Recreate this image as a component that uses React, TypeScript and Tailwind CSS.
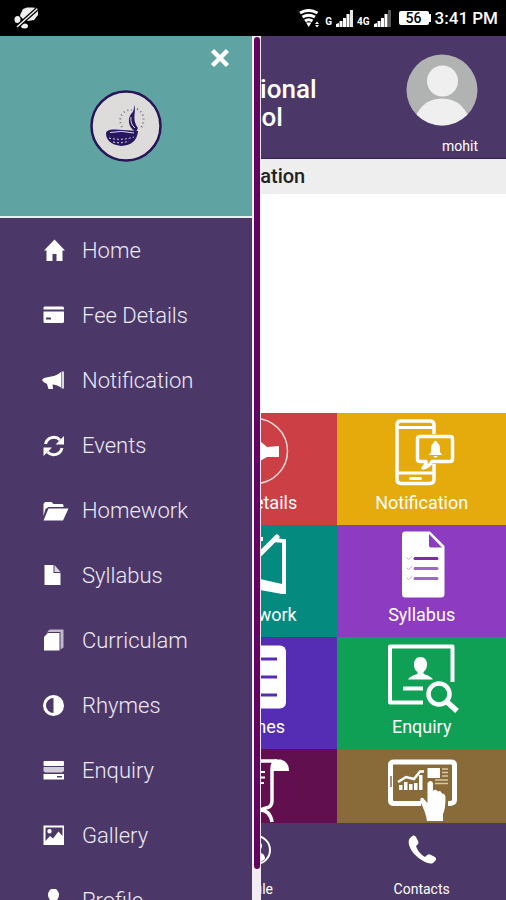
import type { ReactNode } from "react";

const menuItems: { label: string; icon: ReactNode }[] = [
  {
    label: "Home",
    icon: <path d="M12.5 0.5 L23 11.5 H20.5 V22 H14.5 V15 H10.5 V22 H4.5 V11.5 H2 Z" />,
  },
  {
    label: "Fee Details",
    icon: (
      <path
        fillRule="evenodd"
        d="M2.5 2.5 H20.5 Q22 2.5 22 4 V5.5 H1.5 V4 Q1.5 2.5 2.5 2.5 Z M1.5 7.5 H22 V17.5 Q22 19 20.5 19 H3 Q1.5 19 1.5 17.5 Z M4 13.5 V15.5 H9 V13.5 Z"
      />
    ),
  },
  {
    label: "Notification",
    icon: (
      <>
        <path d="M19 3 V18.5 C16 16.5 13 15.5 10.5 15.5 L11 20 H6.5 L5 15 L1.5 13 L0 11 L2 9 L9 7.5 C13 7 16 5.5 19 3 Z" />
        <path opacity="0.8" d="M19.5 2.5 H22 V19.5 H19.5 Z" />
      </>
    ),
  },
  {
    label: "Events",
    icon: (
      <>
        <path
          fill="none"
          stroke="currentColor"
          strokeWidth="3"
          d="M3.5 10 A8.5 8.5 0 0 1 18 6 M20 14 A8.5 8.5 0 0 1 5.5 18"
        />
        <path d="M22 2 V10.5 H13.5 Z M1.5 22 V13.5 H10 Z" />
      </>
    ),
  },
  {
    label: "Homework",
    icon: (
      <>
        <path d="M1.5 17 V5 L3 3 H9.5 L11.5 5 H20.5 L21.5 6 V8 H6.5 L3.5 10 Z" />
        <path d="M6.5 9.5 H26.5 L21 21.5 H1.5 Z" />
      </>
    ),
  },
  {
    label: "Syllabus",
    icon: (
      <>
        <path d="M2.5 1 H11.5 V9 H18.5 V21 H2.5 Z" />
        <path opacity="0.8" d="M12.5 1 L18.5 8 H12.5 Z" />
      </>
    ),
  },
  {
    label: "Curriculam",
    icon: (
      <>
        <path d="M6 4 H17.5 V21.5 H2 V8 Z" />
        <path opacity="0.65" d="M3 6 L7.5 0.5 H21.5 V18.5 L18.5 20.5 V3 H6 Z" />
      </>
    ),
  },
  {
    label: "Rhymes",
    icon: (
      <path
        fillRule="evenodd"
        d="M11.5 1 A10.3 10.3 0 1 1 11.5 22 A10.3 10.3 0 1 1 11.5 1 Z M11.5 4 A7.5 7.5 0 0 0 11.5 19 Z"
      />
    ),
  },
  {
    label: "Enquiry",
    icon: (
      <>
        <rect x="1.5" y="2" width="20.5" height="5" rx="1" />
        <path opacity="0.75" d="M1.5 8 H22 V12 L20 13.5 H3 L1.5 12 Z" />
        <path fillRule="evenodd" d="M1.5 15 H22 V20.5 H1.5 Z M15 17 V18.5 H20 V17 Z" />
      </>
    ),
  },
  {
    label: "Gallery",
    icon: (
      <path
        fillRule="evenodd"
        d="M1.5 1.5 H22 V21 H1.5 Z M3.5 3.5 V17 L8 12 L11 14.5 L16.5 7.5 L20.5 12 V3.5 Z M7.5 5 A2.2 2.2 0 1 1 7.5 9.4 A2.2 2.2 0 1 1 7.5 5 Z"
      />
    ),
  },
  {
    label: "Profile",
    icon: (
      <>
        <ellipse cx="11.5" cy="6" rx="5.5" ry="6.5" />
        <path d="M2 22 C2 16 8 15 11.5 15 C15 15 21 16 21 22 Z" />
      </>
    ),
  },
];

const tiles: { label: string; color: string; icon: ReactNode }[] = [
  {
    label: "Fee Details",
    color: "col-start-2 bg-[#cc3f45]",
    icon: (
      <>
        <circle cx="42" cy="38" r="32.5" fill="none" stroke="#f7dcdc" strokeWidth="1.5" />
        <path d="M18 38 L36 26 L47 28 L54 34 L66 33 V44 L54 44 L47 48 L36 50 Z" />
      </>
    ),
  },
  {
    label: "Notification",
    color: "bg-[#e5ab0d]",
    icon: (
      <>
        <g fill="none" stroke="currentColor" strokeWidth="3.5">
          <path d="M52 21 V12 Q52 8 48 8 H19 Q15 8 15 12 V66 Q15 70.5 19 70.5 H48 Q52 70.5 52 66 V51" />
          <path strokeWidth="3" d="M15 14.5 H52 M15 60 H52" />
          <path
            strokeLinejoin="round"
            d="M38 23.5 H68 Q70.5 23.5 70.5 26 V46 Q70.5 48.5 68 48.5 H50 Q47 54 41 55 Q44.5 52 44 48.5 H38 Q35.5 48.5 35.5 46 V26 Q35.5 23.5 38 23.5 Z"
          />
        </g>
        <rect x="27" y="64" width="13" height="3" rx="1.5" />
        <path d="M53.5 28 Q55.5 28 55.5 30 Q58 31.5 58 36 V39 L60 42 H47 L49 39 V36 Q49 31.5 51.5 30 Q51.5 28 53.5 28 Z M51 43 H56 L53.5 45 Z" />
      </>
    ),
  },
  {
    label: "Homework",
    color: "col-start-2 bg-[#058a80]",
    icon: (
      <>
        <path fill="none" stroke="currentColor" strokeWidth="4" d="M20 13 L50 14 M60 15 L71 16 V64" />
        <path d="M20 50 L47 54 L69 59 L73 62 V69 H69 L47 65 L20 61 Z" />
        <path stroke="currentColor" strokeWidth="5" strokeLinecap="round" d="M64 12 L42 34" />
      </>
    ),
  },
  {
    label: "Syllabus",
    color: "bg-[#8d3cc1]",
    icon: (
      <>
        <path d="M23 6.5 H48 L62.5 21 V69 Q62.5 72.5 59 72.5 H23 Q20 72.5 20 69 V10 Q20 6.5 23 6.5 Z" />
        <path d="M47 9 V20.5 Q47 22.5 49 22.5 H60 Z" fill="#8d3cc1" />
        <g fill="none" strokeWidth="3" strokeLinecap="round">
          <path stroke="#782bad" d="M33 33.5 H55" />
          <path stroke="#9b68c6" d="M33 43.5 H55 M33 53.5 H55" />
          <path stroke="#c9a5e2" strokeWidth="1" d="M25 33 L26.5 34.5 L30 31.5 M25 43 L26.5 44.5 L30 41.5 M25 53 L26.5 54.5 L30 51.5" />
        </g>
      </>
    ),
  },
  {
    label: "Rhymes",
    color: "col-start-2 bg-[#552db5]",
    icon: (
      <>
        <rect x="14" y="8.5" width="59" height="63" rx="6" />
        <path stroke="#552db5" strokeWidth="3" d="M22 22 H64 M22 40 H64 M22 58 H64" />
      </>
    ),
  },
  {
    label: "Enquiry",
    color: "bg-[#0f9f55]",
    icon: (
      <>
        <path
          fill="none"
          stroke="currentColor"
          strokeWidth="4"
          strokeLinejoin="round"
          d="M70.5 45 V9.5 H8 V65.5 H41"
        />
        <path d="M38.5 20 Q45 20 45 28 Q44.5 33 41.5 35 V37 Q49 39 51 42.5 H26 Q28 39 35.5 37 V35 Q32 33 32 28 Q32 20 38.5 20 Z" />
        <path stroke="currentColor" strokeWidth="4" d="M21 51.5 H41" />
        <circle cx="57" cy="57" r="10.5" fill="none" stroke="currentColor" strokeWidth="4.5" />
        <path stroke="currentColor" strokeWidth="5.5" d="M64 64 L75 74" />
      </>
    ),
  },
  {
    label: "",
    color: "col-start-2 bg-[#610f4f]",
    icon: (
      <>
        <path
          fill="none"
          stroke="currentColor"
          strokeWidth="3.5"
          d="M30 12 H64 Q59 13 59 20 V52 Q59 58 53 59 L47 61 Q57 61 59 73"
        />
        <path d="M61 10.5 H68 Q76 13 76 22 H60 Z" />
        <path stroke="currentColor" strokeWidth="2" d="M40 23 H52 M40 28.5 H52 M40 34 H51" />
      </>
    ),
  },
  {
    label: "",
    color: "bg-[#896b3a]",
    icon: (
      <>
        <path
          fill="none"
          stroke="currentColor"
          strokeWidth="5"
          d="M39 54.5 H12 Q8.5 54.5 8.5 51 V16 Q8.5 13 12 13 H69 Q72.5 13 72.5 16 V51 Q72.5 54.5 66 54.5"
        />
        <path stroke="#896b3a" strokeWidth="1.5" d="M9 27 V38" />
        <path fill="none" stroke="currentColor" strokeWidth="2.5" d="M16 33 L24 28 L32 30 L38 22.5 H42" />
        <path d="M17 36 H20.5 V41 H17 Z M22 33 H25.5 V41 H22 Z M27 35 H30.5 V41 H27 Z M32 34 H35.5 V41 H32 Z M37 26 H40.5 V41 H37 Z" />
        <path d="M45.5 19 H58 V29 H45.5 Z" />
        <path stroke="#d5c7a9" strokeWidth="1.5" d="M60 20 H66 M60 23.5 H66 M60 27 H66 M53 31 H66 M53 34.5 H66" />
        <path d="M47 32.5 Q49.5 31 51 34 V42 Q53.5 39.5 56 42.5 Q58.5 41 60 44.5 Q63.5 44.5 63.5 49 Q63.5 60 61 65 V72 H45 Q44 64 38.5 53 Q37.5 48 41 49 L45.5 54 V34 Z" />
      </>
    ),
  },
];

function SignalBars({ dim }: { dim?: boolean }) {
  return (
    <svg width="17" height="17" viewBox="0 0 17 17" fill="currentColor" aria-hidden="true">
      <path d="M0 17 V14 L3 13 V17 Z M3.5 17 V11 H6.5 V17 Z M7 17 V8 H10 V17 Z M10.5 17 V4 H13.5 V17 Z" />
      <path opacity={dim ? 0.35 : 0.9} d="M14 17 V0 H17 V17 Z" />
    </svg>
  );
}

function StatusBar() {
  return (
    <div className="flex h-9 shrink-0 items-center bg-black pl-3.5 pr-2 text-white">
      <svg width="26" height="24" viewBox="0 0 26 24" fill="#eee" aria-hidden="true">
        <path d="M6.5 8 L9 3 L13 1.5 H18 L23 2 L24 5 V9 L20 14 L14 15 L9 13 L6 10 Z" />
        <ellipse cx="3.5" cy="13.5" rx="3" ry="3.5" />
        <ellipse cx="10.5" cy="20" rx="3.5" ry="2.5" />
        <path stroke="#000" strokeWidth="4" d="M3 21 L23 3" />
        <path stroke="#eee" strokeWidth="1.5" d="M3 21 L23 3" />
      </svg>
      <div className="ml-auto flex items-center">
        <svg width="22" height="19" viewBox="0 0 22 19" fill="none" stroke="currentColor" aria-hidden="true">
          <path strokeWidth="3" d="M1 4 Q9.5 -1 18.5 4 M3.5 8 Q9.5 4.5 16 8 M6 12 Q9.5 9.5 13.5 12" />
          <path fill="currentColor" stroke="none" d="M7 13.5 H12.5 L9.7 18 Z M16 15 L18 12.5 L20 15 Z M16 16 H20 L18 18.5 Z" />
        </svg>
        <span className="mx-1 pt-2 text-[10px] font-bold leading-3">G</span>
        <SignalBars />
        <span className="mx-1 pt-2 text-[10px] font-bold leading-3">4G</span>
        <SignalBars dim />
        <span className="ml-2 h-3.5 w-7.5 rounded-xs bg-white text-center text-[14px] font-medium leading-3.5 text-black">
          56
        </span>
        <span className="mr-1 h-2 w-0.5 bg-white" />
        <span className="text-[17px] font-medium leading-6">3:41 PM</span>
      </div>
    </div>
  );
}

function Logo() {
  return (
    <svg width="74" height="72" viewBox="0 0 74 72" role="img" aria-label="School logo">
      <circle cx="37" cy="36" r="34.5" fill="#dedcda" stroke="#281457" strokeWidth="2.5" />
      <path
        fill="none"
        stroke="#77718b"
        strokeWidth="2"
        strokeDasharray="1 3"
        d="M33 37 C28 28 34 19 43 20 M48 19 C56 23 56 32 52 38"
      />
      <g fill="#291661">
        <path d="M45 15 C48 22 42 28 49 38 L47 42 C38 37 39 28 42 24 C45 21 45 19 45 15 Z" />
        <path d="M17 43 Q18 39 26 39.5 L49 41 Q48 55 32 56 Q17 54 17 43 Z" />
      </g>
      <path fill="none" stroke="#dedcda" d="M21 42.5 Q32 40 45 43 M42 27 Q41 34 46 38" />
      <path fill="none" stroke="#dedcda" strokeDasharray="2 2" d="M20 48 Q32 51 45 47 M24 52 Q32 54 40 51" />
    </svg>
  );
}

function Drawer() {
  return (
    <aside className="absolute inset-y-0 left-0 flex w-[261px] overflow-hidden bg-[#f3ecf5]">
      <div className="flex w-[252px] flex-col bg-[#4b3869]">
        <div className="relative flex h-[182px] shrink-0 items-center justify-center border-b-2 border-[#e6f2f2] bg-[#5fa4a2]">
          <Logo />
          <button type="button" aria-label="Close menu" className="absolute right-5 top-2.5 p-0.5 text-white">
            <svg width="20" height="20" viewBox="0 0 20 20" stroke="currentColor" strokeWidth="4.5" aria-hidden="true">
              <path d="M2.5 2.5 L17.5 17.5 M17.5 2.5 L2.5 17.5" />
            </svg>
          </button>
        </div>
        <nav className="flex flex-col">
          {menuItems.map((item) => (
            <a
              key={item.label}
              href="#"
              className="flex h-[65px] shrink-0 items-center gap-3 pl-[42px] text-[22px] font-light text-[#eee9f5]"
            >
              <svg width="28" height="24" viewBox="0 0 28 24" fill="currentColor" className="text-white" aria-hidden="true">
                {item.icon}
              </svg>
              {item.label}
            </a>
          ))}
        </nav>
      </div>
      <div className="ml-0.5 mt-px h-[832px] w-1.5 rounded-full bg-[#61035f]" />
    </aside>
  );
}

export default function App() {
  return (
    <div className="flex h-screen flex-col overflow-hidden bg-white font-[Roboto,sans-serif]">
      <StatusBar />
      <div className="relative flex min-h-0 flex-1 flex-col">
        <header className="relative flex h-[123px] shrink-0 items-center justify-center border-b border-[#302058] bg-[#4b3869] text-white">
          <h1 className="mt-3 pr-5 text-center text-[26px] font-medium leading-7">
            International
            <br />
            School
          </h1>
          <div className="absolute right-7 top-[18px] flex flex-col items-end">
            <svg width="72" height="72" viewBox="0 0 72 72" aria-hidden="true">
              <clipPath id="avatar">
                <circle cx="36" cy="36" r="35.5" />
              </clipPath>
              <g clipPath="url(#avatar)">
                <path fill="#b1b3b2" d="M0 0 H72 V72 H0 Z" />
                <circle cx="36.5" cy="27" r="15.5" fill="#efefef" />
                <ellipse cx="36" cy="69" rx="27" ry="24.5" fill="#efefef" />
              </g>
            </svg>
            <span className="mt-2.5 text-sm leading-5">mohit</span>
          </div>
        </header>
        <h2 className="h-[35px] shrink-0 bg-[#eee] text-center text-xl font-medium leading-[35px] text-[#222]">
          Notification
        </h2>
        <div className="h-[219px] shrink-0 bg-white" />
        <main className="grid min-h-0 flex-1 auto-rows-[112px] grid-cols-3 overflow-hidden">
          {tiles.map((tile) => (
            <a key={tile.color} href="#" className={`flex flex-col items-center text-white ${tile.color}`}>
              <svg width="80" height="76" viewBox="0 0 80 76" fill="currentColor" aria-hidden="true">
                {tile.icon}
              </svg>
              <span className="text-lg leading-7">{tile.label}</span>
            </a>
          ))}
        </main>
        <footer className="grid h-[77px] shrink-0 grid-cols-3 bg-[#4b3869] text-sm text-white">
          <a href="#" className="col-start-2 flex flex-col items-center gap-3 pt-2.5">
            <svg width="36" height="34" viewBox="0 0 36 34" fill="none" stroke="currentColor" strokeWidth="2" aria-hidden="true">
              <circle cx="21" cy="17" r="14" />
              <path fill="currentColor" stroke="none" d="M11 27 Q13 21 20 20 L26 20 Q30 21 30 26 Q21 34 11 27 Z" />
              <circle cx="21" cy="13" r="5" />
            </svg>
            Profile
          </a>
          <a href="#" className="flex flex-col items-center gap-3 pt-2.5">
            <svg width="34" height="34" viewBox="0 0 34 34" fill="currentColor" aria-hidden="true">
              <path d="M5 5 L8 2.5 Q10 2 11 4 L13.5 9 Q14 11 11 13 Q13 20 20 24 Q23 20.5 25 21.5 L30 24 Q31.5 25 31 27 L28 30 Q25 31.5 19 28.5 Q7 22 4 12 Q3 7 5 5 Z" />
            </svg>
            Contacts
          </a>
        </footer>
        <Drawer />
      </div>
    </div>
  );
}
